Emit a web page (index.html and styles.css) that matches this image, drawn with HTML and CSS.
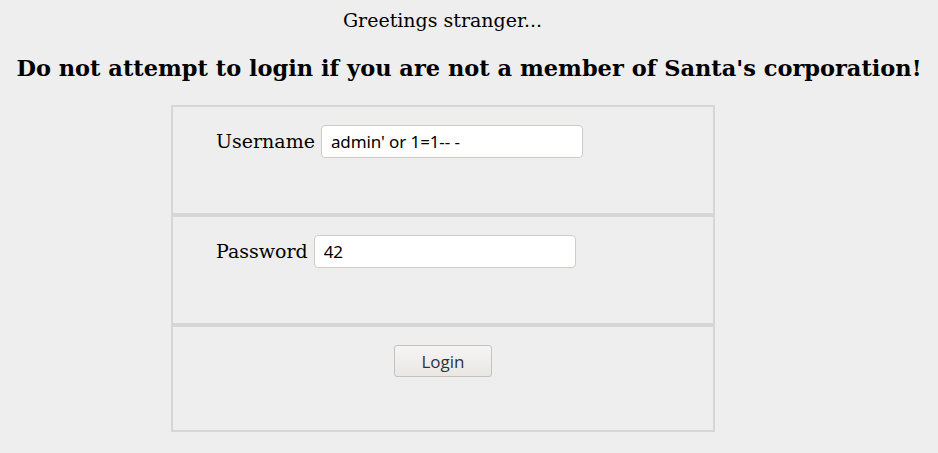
FILE: index.html
```html
<!DOCTYPE html>
<html>
<head>
<meta charset="utf-8">
<link rel="stylesheet" href="styles.css">
</head>
<body>
<div class="greeting">Greetings stranger...</div>
<h2 class="warning">Do not attempt to login if you are not a member of Santa's corporation!</h2>
<form class="login">
  <div class="row">
    <label class="label">Username</label>
    <input class="field" type="text" value="admin' or 1=1-- -">
  </div>
  <div class="row">
    <label class="label">Password</label>
    <input class="field" type="text" value="42">
  </div>
  <div class="row row-center">
    <button class="btn" type="button">Login</button>
  </div>
</form>
</body>
</html>
```
FILE: styles.css
```css
html, body {
  background: #eeeeee;
}
body {
  margin: 8px;
  font-family: "DejaVu Serif", serif;
  color: #000;
}
.greeting {
  width: 869px;
  text-align: center;
  font-size: 19px;
  line-height: 22px;
  padding-top: 1px;
}
.warning {
  margin: 0;
  padding-top: 24px;
  text-align: center;
  font-size: 22.5px;
  line-height: 26px;
  font-weight: bold;
  white-space: nowrap;
}
.login {
  width: 544px;
  margin: 24px 0 0 163px;
  display: flex;
  flex-direction: column;
}
.row {
  border: 2px solid #d6d6d6;
  display: flex;
  align-items: flex-start;
  padding: 18px 0 0 43px;
  box-sizing: border-box;
  height: 110px;
}
.row-center {
  justify-content: center;
  padding: 18px 0 0 0;
  height: 107px;
}
.label {
  font-family: "DejaVu Serif", serif;
  font-size: 19px;
  line-height: 33px;
  margin-right: 6px;
}
.field {
  width: 262px;
  height: 33px;
  box-sizing: border-box;
  border: 1px solid #cfcbc6;
  border-radius: 4px;
  background: #fff;
  font-family: "Noto Sans", sans-serif;
  font-size: 17px;
  letter-spacing: -0.1px;
  padding: 0 9px;
  color: #000;
  outline: none;
}
.btn {
  width: 98px;
  height: 32px;
  border: 1px solid #c6c2bd;
  border-radius: 3px;
  background: linear-gradient(#f6f5f4, #e9e7e4);
  font-family: "Open Sans", sans-serif;
  font-size: 17px;
  color: #2e3436;
  padding: 0;
}
```
